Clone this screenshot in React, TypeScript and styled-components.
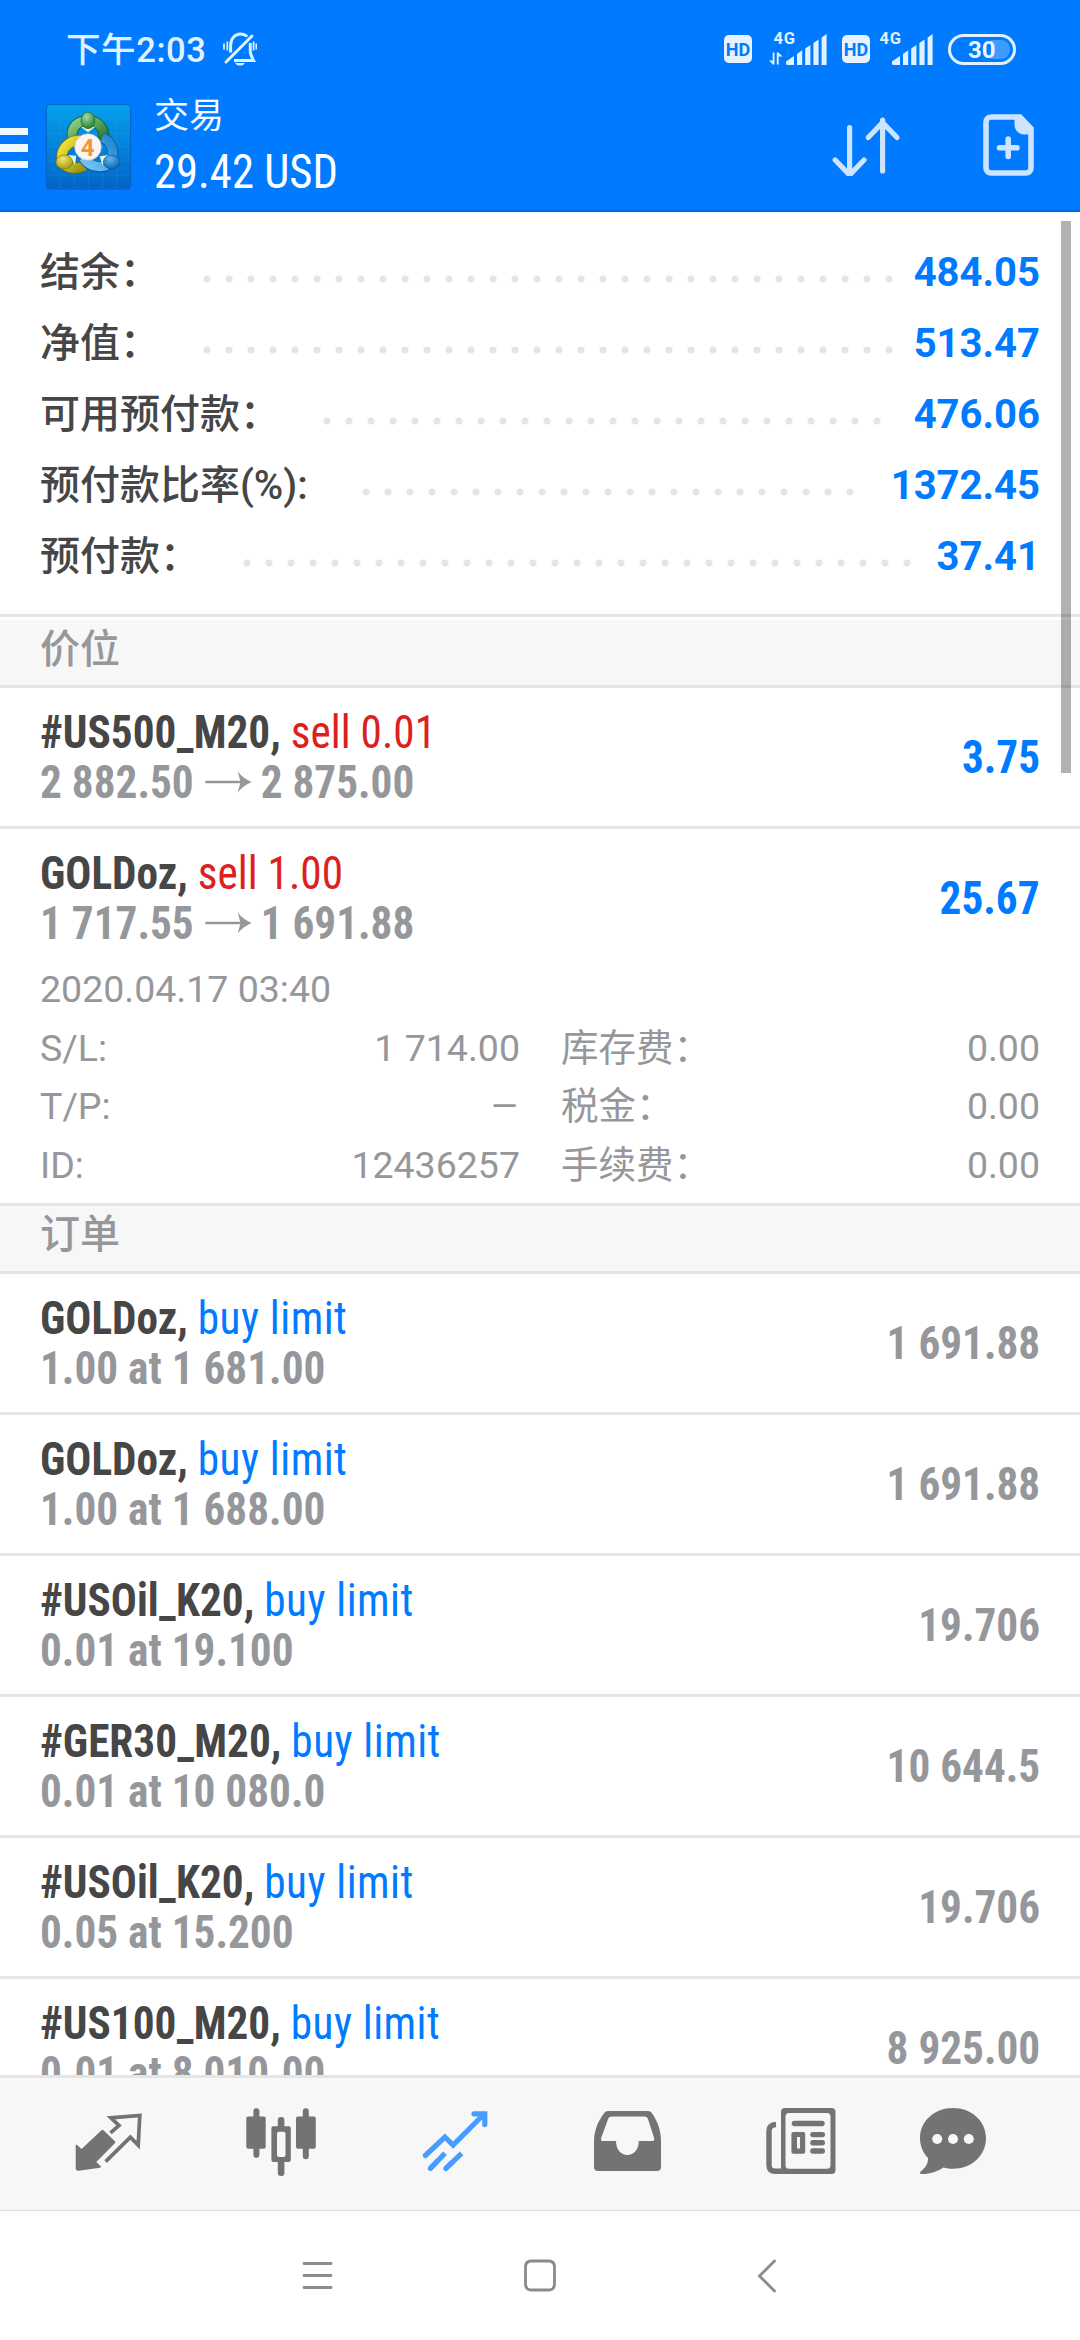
import React from "react";
import styled, { createGlobalStyle, css } from "styled-components";

const BLUE = "#007aff";
const GRAY = "#96979b";
const LINE = "#e5e5e5";
const PANEL = "#f7f7f7";

const GlobalStyle = createGlobalStyle`
  * { box-sizing: border-box; }
  body { margin: 0; background: #fff; }
  svg { display: block; flex: none; }
`;

const Screen = styled.div`
  width: 1080px;
  height: 2340px;
  display: flex;
  flex-direction: column;
  position: relative;
  overflow: hidden;
  background: #fff;
  font-family: Roboto, "Noto Sans CJK SC", sans-serif;
  white-space: nowrap;
`;

const condensed = css`
  font-family: "Roboto Condensed", Roboto, "Noto Sans CJK SC", sans-serif;
  font-stretch: 75%;
`;

/* ---------- header ---------- */

const Header = styled.header`
  height: 212px;
  background: ${BLUE};
  border-bottom: 2px solid #006be0;
  flex: none;
`;

const StatusBar = styled.div`
  height: 98px;
  padding: 0 64px 0 66px;
  display: flex;
  align-items: center;
  justify-content: space-between;
`;

const StatusLeft = styled.div`
  display: flex;
  align-items: center;
  gap: 16px;
`;

const Clock = styled.span`
  font-size: 34.5px;
  line-height: 40px;
  font-weight: 500;
  letter-spacing: 0.6px;
  color: #e0f2ff;
  margin-top: 2px;
`;

const StatusRight = styled.div`
  display: flex;
  align-items: center;
`;

const HdBadge = styled.span`
  width: 28px;
  height: 28px;
  border-radius: 5px;
  background: #e6f2ff;
  color: ${BLUE};
  font: 700 18px/30px Roboto, sans-serif;
  text-align: center;
`;

const Signal = styled.div<{ $left: number }>`
  margin: -8px 15px 0 ${(p) => p.$left}px;
`;

const Battery = styled.div`
  width: 68px;
  height: 31px;
  border: 3px solid #e0f2ff;
  border-radius: 16px;
  padding: 3px;
  display: flex;
  justify-content: flex-end;
  position: relative;
`;

const BatteryFill = styled.div`
  width: 19px;
  height: 19px;
  border-radius: 0 9px 9px 0;
  background: #409bff;
`;

const BatteryText = styled.span`
  position: absolute;
  left: 17px;
  top: 0;
  font: 700 24px/26px Roboto, sans-serif;
  color: #e9f5ff;
`;

const TitleBar = styled.div`
  height: 112px;
  display: flex;
  padding-right: 46px;
`;

const Burger = styled.div`
  width: 27.5px;
  margin-top: 29.5px;
  display: flex;
  flex-direction: column;
  gap: 9px;
  i {
    height: 7.6px;
    background: #eef8ff;
  }
`;

const LogoBox = styled.div`
  margin: 5px 0 0 17.5px;
`;

const Titles = styled.div`
  margin-left: 22px;
  padding-top: 1px;
  flex: 1;
`;

const Title = styled.div`
  font-size: 35px;
  line-height: 36px;
  color: #f4faff;
`;

const Profit = styled.div`
  ${condensed}
  font-size: 48px;
  line-height: 56px;
  margin-top: 9px;
  color: #fff;
  transform: scaleX(0.93);
  transform-origin: left;
`;

const Actions = styled.div`
  display: flex;
  padding-top: 16px;
  gap: 82px;
`;

/* ---------- account summary ---------- */

const Summary = styled.section`
  height: 402px;
  padding: 25px 40px 0;
  flex: none;
`;

const SummaryRow = styled.div`
  height: 71px;
  display: flex;
  align-items: center;
`;

const SummaryLabel = styled.span`
  font-size: 40px;
  line-height: 71px;
  font-weight: 500;
  color: #464646;
`;

const Leader = styled.span<{ $gap: number }>`
  height: 8px;
  margin: 12px 0 0 ${(p) => p.$gap}px;
  background: radial-gradient(circle, #e5e5e5 3.2px, transparent 3.9px) 0 0 / 22px 8px repeat-x;
`;

const SummaryValue = styled.span`
  margin-left: auto;
  font-size: 40px;
  line-height: 71px;
  font-weight: 700;
  color: ${BLUE};
`;

/* ---------- lists ---------- */

const SectionHeader = styled.h2<{ $first?: boolean }>`
  margin: 0;
  height: ${(p) => (p.$first ? 74 : 71)}px;
  border-top: 3px solid ${LINE};
  border-bottom: 3px solid ${LINE};
  background: ${PANEL};
  box-shadow: ${(p) => (p.$first ? "inset 0 3px #fff" : "none")};
  padding: ${(p) => (p.$first ? 4 : 0)}px 40px 0;
  font-size: 40px;
  line-height: 57px;
  font-weight: 500;
  color: ${GRAY};
  flex: none;
`;

const List = styled.div<{ $fill?: boolean }>`
  ${(p) => (p.$fill ? "flex: 1; min-height: 0; overflow: hidden;" : "flex: none;")}
`;

const Row = styled.div<{ $line?: boolean }>`
  height: 141px;
  padding: 19px 40px 0;
  border-bottom: ${(p) => (p.$line === false ? 0 : 3)}px solid ${LINE};
  display: flex;
  justify-content: space-between;
  ${condensed}
  font-size: 46.5px;
  line-height: 50px;
  font-weight: 700;
  color: ${GRAY};
`;

const Deal = styled.div`
  transform: scaleX(0.93);
  transform-origin: left;
`;

const Symbol = styled.div`
  color: #464646;
`;

const Side = styled.span<{ $sell?: boolean }>`
  font-weight: 400;
  letter-spacing: ${(p) => (p.$sell ? 0 : 0.5)}px;
  color: ${(p) => (p.$sell ? "#dc2020" : BLUE)};
`;

const Prices = styled.div`
  display: flex;
  align-items: center;
`;

const Amount = styled.div<{ $profit?: boolean }>`
  margin-top: 25px;
  color: ${(p) => (p.$profit ? BLUE : GRAY)};
  transform: scaleX(0.93);
  transform-origin: right;
`;

const Details = styled.div`
  display: flow-root;
  height: 233px;
  padding: 0 40px;
  font-size: 37.5px;
  line-height: 58.7px;
  color: ${GRAY};
`;

const OpenTime = styled.div`
  margin-top: -10px;
`;

const DetailGrid = styled.div`
  display: grid;
  grid-template-columns: 480px 479px;
  column-gap: 41px;
`;

const Detail = styled.div`
  display: flex;
  justify-content: space-between;
`;

const DetailValue = styled.span<{ $empty?: boolean }>`
  transform: ${(p) => (p.$empty ? "scaleX(1.2)" : "none")};
  transform-origin: right;
`;

/* ---------- bottom bars ---------- */

const Toolbar = styled.nav`
  height: 136px;
  border-top: 3px solid ${LINE};
  border-bottom: 1px solid #dedede;
  background: ${PANEL};
  padding: 25px 0 0 68px;
  display: grid;
  grid-template-columns: repeat(4, 173.3px) 151.8px 80px;
  flex: none;
`;

const SystemNav = styled.div`
  height: 129px;
  display: flex;
  align-items: center;
  justify-content: center;
  gap: 187px;
  flex: none;
`;

const Scrollbar = styled.div`
  position: absolute;
  left: 1061px;
  top: 221px;
  width: 10px;
  height: 552px;
  background: rgba(0, 0, 0, 0.3);
`;

/* ---------- icons ---------- */

const MutedBell = () => (
  <svg width="34" height="34" viewBox="0 0 34 34" fill="none" stroke="#e0f2ff" strokeWidth="3">
    <path d="M3 30 29 4" strokeLinecap="round" />
    <path d="M7.6 20.5V13.5C7.6 6.5 12 2 17.5 2c2.6 0 5 .9 6.800 2.500" />
    <path d="M27.300 11v8.500c0 3 1.200 5 3.200 8.900H11" />
    <path d="M12 31h10c-1 1.600-3 2.600-5 2.600s-4-1-5-2.600Z" fill="#e0f2ff" stroke="none" />
    <path d="M1 11.500v6M4.300 9.500v9M33.300 11.500v6M30.600 9.500v9" strokeWidth="1.700" />
  </svg>
);

const SignalIcon = ({ data }: { data?: boolean }) => (
  <svg width="58" height="39" viewBox="0 -6 58 39" fill="#e0f2ff">
    <text x="4.500" y="12" fontFamily="Roboto" fontWeight="700" fontSize="16.500" textLength="21.500">
      4G
    </text>
    <path d="M17 31.500v-2l8-5.500v9h-6.500a1.500 1.500 0 0 1-1.500-1.500ZM28 33V22l5.200-3.700V33ZM36.200 33V16.500l5.200-3.600V33ZM44.400 33V11l5.200-3.600V33ZM52.600 33V5.500L57.600 2v31Z" />
    {data && <path d="M5.500 20.500v12H3.800L0 28.500h3.700v-8ZM7.800 32.500v-12h1.700l4 4H9.700v8Z" />}
  </svg>
);

const Logo = () => (
  <svg width="87" height="87" viewBox="14 20 261 261">
    <defs>
      <linearGradient id="sky" x1="0" y1="0" x2="0" y2="1">
        <stop offset="0" stopColor="#05a0ea" />
        <stop offset="1" stopColor="#0264c8" />
      </linearGradient>
      <linearGradient id="green" x1="0" y1="0" x2="1" y2="1">
        <stop offset="0" stopColor="#8fd08a" />
        <stop offset="1" stopColor="#1c6e28" />
      </linearGradient>
      <linearGradient id="yellow" x1="0" y1="0" x2="1" y2="1">
        <stop offset="0" stopColor="#f6e73c" />
        <stop offset="1" stopColor="#9b9312" />
      </linearGradient>
      <linearGradient id="blue" x1="1" y1="0" x2="0" y2="1">
        <stop offset="0" stopColor="#1c86cc" />
        <stop offset="1" stopColor="#7cc6f5" />
      </linearGradient>
      <radialGradient id="gHead" cx=".4" cy=".3" r=".7">
        <stop offset="0" stopColor="#a4dba6" />
        <stop offset="1" stopColor="#1f8034" />
      </radialGradient>
      <radialGradient id="yHead" cx=".4" cy=".3" r=".7">
        <stop offset="0" stopColor="#eeea70" />
        <stop offset="1" stopColor="#a39c14" />
      </radialGradient>
      <radialGradient id="bHead" cx=".4" cy=".3" r=".7">
        <stop offset="0" stopColor="#62b4ea" />
        <stop offset="1" stopColor="#0b66b4" />
      </radialGradient>
    </defs>
    <rect x="18" y="25" width="253" height="253" rx="9" fill="url(#sky)" stroke="#0a5fc0" strokeWidth="3" />
    <path d="M60 28v247M102 28v247M144 28v247M187 28v247M229 28v247M20 68h249M20 110h249M20 152h249M20 194h249M20 236h249" stroke="#2fa4ee" strokeOpacity=".35" strokeWidth="2" />
    <g fill="none">
      <path d="M97 128c-8-38 18-55 46-55s56 23 46 64" stroke="#17571f" strokeWidth="33" />
      <path d="M97 128c-8-38 18-55 46-55s56 23 46 64" stroke="url(#green)" strokeWidth="28" />
      <path d="M122 132c-34-2-60 24-58 56 2 26 40 35 68 20" stroke="#77700c" strokeWidth="33" />
      <path d="M122 132c-34-2-60 24-58 56 2 26 40 35 68 20" stroke="url(#yellow)" strokeWidth="28" />
      <path d="M186 124c28 10 36 38 29 66-12 29-63 29-86-6" stroke="#0b559c" strokeWidth="33" />
      <path d="M186 124c28 10 36 38 29 66-12 29-63 29-86-6" stroke="url(#blue)" strokeWidth="28" />
    </g>
    <path d="M84 176 108 178 104 206ZM205 176 178 180 186 206ZM122 92 143 108 164 92Z" fill="#eaf3d8" />
    <ellipse cx="143" cy="72" rx="21" ry="25" fill="url(#gHead)" stroke="#1a6a2a" strokeWidth="2" />
    <ellipse cx="72" cy="197" rx="25" ry="21" fill="url(#yHead)" stroke="#807a10" strokeWidth="2" />
    <ellipse cx="214" cy="197" rx="25" ry="21" fill="url(#bHead)" stroke="#0b559c" strokeWidth="2" />
    <circle cx="143" cy="152" r="40" fill="#f8f5f4" stroke="#b9bcc0" strokeWidth="2" />
    <text x="142" y="178" fontFamily="Roboto" fontWeight="700" fontSize="72" textAnchor="middle" fill="#f79432">
      4
    </text>
  </svg>
);

const SortIcon = () => (
  <svg width="69" height="62" viewBox="831 115 69 62" fill="none" stroke="#cce4ff" strokeWidth="5.200" strokeLinecap="round">
    <path d="M848.600 128.500V175M834.200 161l14.400 15 14.400-15" />
    <path d="M881.600 172V121M867.200 138.500l14.400-15 14.400 15" />
  </svg>
);

const NewOrderIcon = () => (
  <svg width="51" height="62" viewBox="982.500 115 51 62" fill="none" stroke="#cce4ff" strokeWidth="5.600">
    <path d="M990 118h29.500l11 11.500V169a5 5 0 0 1-5 5H990.500a5 5 0 0 1-5-5v-46a5 5 0 0 1 5-5Z" />
    <path d="M1014 118h6.500l12 12.500v5h-8.500c-6 0-10-4.500-10-10Z" fill="#cce4ff" stroke="none" />
    <path d="M1007.700 140v17.500M999 148.700h17.500" strokeLinecap="round" />
  </svg>
);

const PriceArrow = () => (
  <svg width="72" height="24" viewBox="0 0 68 24" preserveAspectRatio="none" fill={GRAY}>
    <path d="M12 10.700h35.500L45 1.500c4 5 8.500 8.200 14 10.500-5.500 2.300-10 5.500-14 10.500l2.500-9.200H12Z" />
  </svg>
);

const QuotesIcon = () => (
  <svg width="80" height="80" viewBox="68 2103 80 80" fill="#737373">
    <path d="M76.500 2144.500l5 4.500 20-18.800q1-.8 2 .1l11.400 11q.9 1-.1 2L96.300 2162l4.700 4.500-.8 1.300-21.700 3q-2.800 0-2.800-2.800v-22.800Z" />
    <path d="M110.500 2132.800l8.500-7.400-8.200-7.600 29-2.300-1.600 29.700-7.800-8-24.800 24.400" fill="none" stroke="#737373" strokeWidth="3.700" />
  </svg>
);

const ChartIcon = () => (
  <svg width="80" height="80" viewBox="241 2103 80 80" fill="#737373">
    <rect x="246.300" y="2116.500" width="19.400" height="32.200" rx="2" />
    <rect x="253.400" y="2108.300" width="6" height="49.500" rx="3" />
    <rect x="296" y="2116.500" width="19.800" height="32.200" rx="2" />
    <rect x="302.800" y="2108.300" width="6" height="51" rx="3" />
    <rect x="277.800" y="2117" width="6.600" height="12" rx="3" />
    <rect x="277.800" y="2159" width="6.600" height="17" rx="3" />
    <path fillRule="evenodd" d="M273.400 2126.300h15.400a2 2 0 0 1 2 2V2160a2 2 0 0 1-2 2h-15.400a2 2 0 0 1-2-2v-31.700a2 2 0 0 1 2-2ZM279 2131.800a2 2 0 0 0-2 2V2155a2 2 0 0 0 2 2h4.500a2 2 0 0 0 2-2v-21.200a2 2 0 0 0-2-2Z" />
  </svg>
);

const TradeIcon = () => (
  <svg width="80" height="80" viewBox="414 2103 80 80" fill="none" stroke="#479cff" strokeWidth="5.200" strokeLinecap="round">
    <path d="M424.300 2155.500l19.600-18.500 8.200 8 30.500-30.500" strokeLinejoin="miter" />
    <path d="M473 2113.800h10.800v10.800" />
    <path d="M429.300 2168.500L444 2153.300M444.800 2168.500l15.800-15.200" strokeLinecap="butt" />
    <path d="M429.300 2168.500l6-6.200M444.800 2168.500l6-5.800" />
  </svg>
);

const HistoryIcon = () => (
  <svg width="80" height="80" viewBox="588 2103 80 80" fill="#737373">
    <path
      fillRule="evenodd"
      d="M608 2111h40q2.500 0 4 2.200C658 2122 661 2131 661 2142v25q0 4-4 4h-59q-4 0-4-4v-25c0-11 3.500-20 10-28.800q1.500-2.200 4-2.200ZM611.500 2116.400q-2.300 0-3.200 2l-7 19q-1.200 3.600 2 3.600H616c0 8.500 5 14 11.400 14s11.400-5.500 11.400-14h12.700q3.700 0 2.500-3.600l-6.200-19q-.9-2-3.200-2Z"
    />
  </svg>
);

const NewsIcon = () => (
  <svg width="80" height="80" viewBox="761 2103 80 80" fill="#737373">
    <path fillRule="evenodd" d="M785 2108h46.500a4 4 0 0 1 4 4v58a4 4 0 0 1-4 4H785a4 4 0 0 1-4-4v-58a4 4 0 0 1 4-4ZM789 2113a3.500 3.500 0 0 0-3.500 3.500v48.800a3.500 3.500 0 0 0 3.500 3.500h38a3.500 3.500 0 0 0 3.500-3.500v-48.800a3.500 3.500 0 0 0-3.500-3.500Z" />
    <path d="M776 2124.500q-7 .500-7 6.500v34q0 6.300 6.500 6.300h8" fill="none" stroke="#737373" strokeWidth="5.400" />
    <rect x="791.700" y="2120.800" width="33" height="5.400" rx="2.700" />
    <path fillRule="evenodd" d="M793.400 2132h9.800a2 2 0 0 1 2 2v17.800a2 2 0 0 1-2 2h-9.800a2 2 0 0 1-2-2V2134a2 2 0 0 1 2-2ZM797 2137v11.500h3V2137Z" />
    <rect x="810.200" y="2131.900" width="14.800" height="5.400" rx="2.700" />
    <rect x="810.200" y="2140" width="14.800" height="5.400" rx="2.700" />
    <rect x="810.200" y="2148.300" width="14.800" height="5.400" rx="2.700" />
  </svg>
);

const ChatIcon = () => (
  <svg width="80" height="80" viewBox="913 2103 80 80" fill="#737373">
    <path d="M953 2108c18.500 0 33 13 33 30.300s-14.500 30.500-33 30.500c-3.300 0-6.600-.5-9.600-1.300-6 4-14 6.700-21.800 6.500-1.800 0-2.200-1.300-.8-2.400 5-4 7.500-8.300 7.200-13.600-5-5.300-8-12-8-19.700 0-17.300 14.500-30.300 33-30.300Z" />
    <circle cx="937.200" cy="2139" r="5" fill={PANEL} />
    <circle cx="953" cy="2139" r="5" fill={PANEL} />
    <circle cx="968.800" cy="2139" r="5" fill={PANEL} />
  </svg>
);

const NavIcon = ({ d }: { d: string }) => (
  <svg width="40" height="40" viewBox="0 0 40 40" fill="none" stroke="#8b8b8b" strokeWidth="2.800" strokeLinecap="round">
    <path d={d} />
  </svg>
);

/* ---------- data ---------- */

const summary = [
  { label: "结余：", value: "484.05", dots: 32, gap: 35.6 },
  { label: "净值：", value: "513.47", dots: 32, gap: 35.6 },
  { label: "可用预付款：", value: "476.06", dots: 26, gap: 35.6 },
  { label: "预付款比率(%):", value: "1372.45", dots: 23, gap: 47 },
  { label: "预付款：", value: "37.41", dots: 31, gap: 35.6 },
];

const orders = [
  { symbol: "GOLDoz", terms: "1.00 at 1 681.00", price: "1 691.88" },
  { symbol: "GOLDoz", terms: "1.00 at 1 688.00", price: "1 691.88" },
  { symbol: "#USOil_K20", terms: "0.01 at 19.100", price: "19.706" },
  { symbol: "#GER30_M20", terms: "0.01 at 10 080.0", price: "10 644.5" },
  { symbol: "#USOil_K20", terms: "0.05 at 15.200", price: "19.706" },
  { symbol: "#US100_M20", terms: "0.01 at 8 010.00", price: "8 925.00" },
];

const details = [
  ["S/L:", "1 714.00", "库存费：", "0.00"],
  ["T/P:", "–", "税金：", "0.00"],
  ["ID:", "12436257", "手续费：", "0.00"],
];

type PositionProps = { symbol: string; volume: string; from: string; to: string; profit: string; line?: boolean };

const Position = ({ symbol, volume, from, to, profit, line }: PositionProps) => (
  <Row $line={line}>
    <Deal>
      <Symbol>
        {symbol}, <Side $sell>sell {volume}</Side>
      </Symbol>
      <Prices>
        <span>{from}</span>
        <PriceArrow />
        <span>{to}</span>
      </Prices>
    </Deal>
    <Amount $profit>{profit}</Amount>
  </Row>
);

export default function App() {
  return (
    <Screen>
      <GlobalStyle />
      <Header>
        <StatusBar>
          <StatusLeft>
            <Clock>下午2:03</Clock>
            <MutedBell />
          </StatusLeft>
          <StatusRight>
            <HdBadge>HD</HdBadge>
            <Signal $left={17}>
              <SignalIcon data />
            </Signal>
            <HdBadge>HD</HdBadge>
            <Signal $left={5}>
              <SignalIcon />
            </Signal>
            <Battery>
              <BatteryFill />
              <BatteryText>30</BatteryText>
            </Battery>
          </StatusRight>
        </StatusBar>
        <TitleBar>
          <Burger>
            <i />
            <i />
            <i />
          </Burger>
          <LogoBox>
            <Logo />
          </LogoBox>
          <Titles>
            <Title>交易</Title>
            <Profit>29.42 USD</Profit>
          </Titles>
          <Actions>
            <SortIcon />
            <NewOrderIcon />
          </Actions>
        </TitleBar>
      </Header>

      <Summary>
        {summary.map((item) => (
          <SummaryRow key={item.label}>
            <SummaryLabel>{item.label}</SummaryLabel>
            <Leader $gap={item.gap} style={{ width: item.dots * 22 }} />
            <SummaryValue>{item.value}</SummaryValue>
          </SummaryRow>
        ))}
      </Summary>

      <SectionHeader $first>价位</SectionHeader>
      <List>
        <Position symbol="#US500_M20" volume="0.01" from="2 882.50" to="2 875.00" profit="3.75" />
        <Position symbol="GOLDoz" volume="1.00" from="1 717.55" to="1 691.88" profit="25.67" line={false} />
        <Details>
          <OpenTime>2020.04.17 03:40</OpenTime>
          <DetailGrid>
            {details.map(([name, value, label, amount]) => (
              <React.Fragment key={name}>
                <Detail>
                  <span>{name}</span>
                  <DetailValue $empty={value === "–"}>{value}</DetailValue>
                </Detail>
                <Detail>
                  <span>{label}</span>
                  <DetailValue>{amount}</DetailValue>
                </Detail>
              </React.Fragment>
            ))}
          </DetailGrid>
        </Details>
      </List>

      <SectionHeader>订单</SectionHeader>
      <List $fill>
        {orders.map((order) => (
          <Row key={order.symbol + order.terms}>
            <Deal>
              <Symbol>
                {order.symbol}, <Side>buy limit</Side>
              </Symbol>
              <div>{order.terms}</div>
            </Deal>
            <Amount>{order.price}</Amount>
          </Row>
        ))}
      </List>

      <Toolbar>
        <QuotesIcon />
        <ChartIcon />
        <TradeIcon />
        <HistoryIcon />
        <NewsIcon />
        <ChatIcon />
      </Toolbar>
      <SystemNav>
        <NavIcon d="M11 7.500h27M11 19.500h27M11 31.500h27" />
        <NavIcon d="M11.500 5h17q6 0 6 6v17q0 6-6 6h-17q-6 0-6-6v-17q0-6 6-6Z" />
        <NavIcon d="M27.500 5 12.500 20 27.500 35" />
      </SystemNav>
      <Scrollbar />
    </Screen>
  );
}
